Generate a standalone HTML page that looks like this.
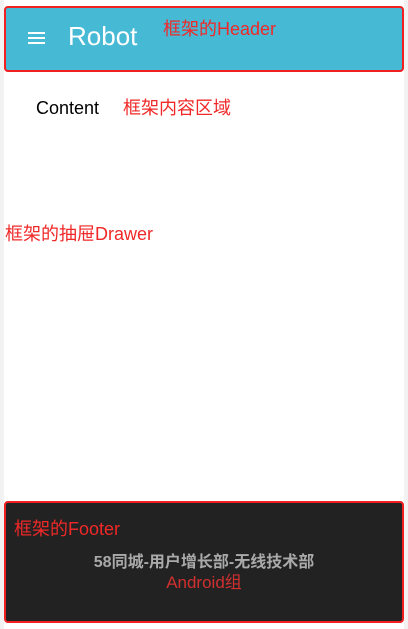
<!DOCTYPE html>
<html><head><meta charset="utf-8"><style>
html,body{margin:0;padding:0;width:408px;height:629px;background:#f2f2f2;overflow:hidden;font-family:"Liberation Sans","Noto Sans CJK SC",sans-serif}
.page{position:absolute;left:4px;top:0;width:400px;height:629px;background:#fff}
.hdr{position:absolute;left:4px;top:6px;width:396px;height:62px;background:#46b9d4;border:2px solid #f02020;border-radius:4px}
.red{color:#f02828;position:absolute;font-size:18px;white-space:nowrap}
.ftr{position:absolute;left:4px;top:501px;width:396px;height:118px;background:#222;border:2px solid #f02020;border-radius:4px}
</style></head><body>
<div class="page"></div>
<div class="hdr">
<svg style="position:absolute;left:21px;top:22px" width="20" height="16"><rect x="1" y="2" width="17" height="2" fill="#fff"/><rect x="1" y="7" width="17" height="2" fill="#fff"/><rect x="1" y="12" width="17" height="2" fill="#fff"/></svg>
<div style="position:absolute;left:62px;top:13px;color:#fff;font-size:26px">Robot</div>
<div class="red" style="left:157px;top:7px">框架的Header</div>
</div>
<div style="position:absolute;left:36px;top:98px;font-size:18px;color:#000">Content</div>
<div class="red" style="left:123px;top:94px">框架内容区域</div>
<div class="red" style="left:5px;top:220px">框架的抽屉Drawer</div>
<div class="ftr">
<div class="red" style="left:8px;top:12px">框架的Footer</div>
<div style="position:absolute;left:0;width:396px;top:45px;text-align:center;color:#aaa;font-size:16px;font-weight:bold">58同城-用户增长部-无线技术部</div>
<div style="position:absolute;left:0;width:396px;top:65px;text-align:center;color:#d03030;font-size:17px">Android组</div>
</div>
</body></html>
